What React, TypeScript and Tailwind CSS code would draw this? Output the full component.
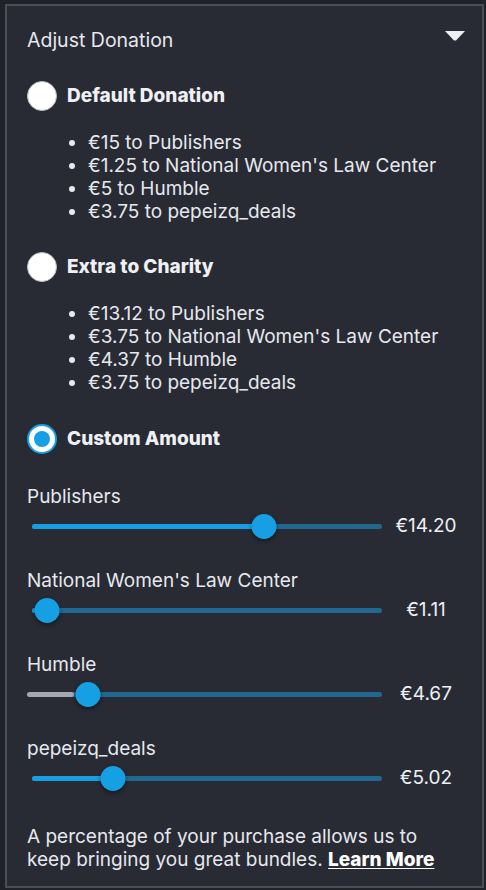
import React from 'react'

type Split = { name: string; value: string; pct: number; floor?: number }

const defaults = [
  '€15 to Publishers',
  "€1.25 to National Women's Law Center",
  '€5 to Humble',
  '€3.75 to pepeizq_deals',
]

const extra = [
  '€13.12 to Publishers',
  "€3.75 to National Women's Law Center",
  '€4.37 to Humble',
  '€3.75 to pepeizq_deals',
]

const splits: Split[] = [
  { name: 'Publishers', value: '€14.20', pct: 66.3 },
  { name: "National Women's Law Center", value: '€1.11', pct: 4.3 },
  { name: 'Humble', value: '€4.67', pct: 16, floor: 13 },
  { name: 'pepeizq_deals', value: '€5.02', pct: 23.1 },
]

function Radio({ checked }: { checked?: boolean }) {
  if (checked) {
    return (
      <span className="flex h-[30px] w-[30px] shrink-0 items-center justify-center rounded-full border-2 border-[#169fe3] bg-white">
        <span className="h-[16px] w-[16px] rounded-full bg-[#169fe3]" />
      </span>
    )
  }
  return <span className="h-[30px] w-[30px] shrink-0 rounded-full border border-[#b9bdc6] bg-white" />
}

function Option({ label, checked }: { label: string; checked?: boolean }) {
  return (
    <div className="flex h-[30px] items-center gap-[10px]">
      <Radio checked={checked} />
      <span className="text-[19px] font-extrabold text-[#eef0f4]">{label}</span>
    </div>
  )
}

function List({ items }: { items: string[] }) {
  return (
    <ul className="mt-[20px] list-disc pl-[61px] text-[19px] leading-[23px] marker:text-[#e6e8ee]">
      {items.map((t) => (
        <li key={t}>{t}</li>
      ))}
    </ul>
  )
}

function Slider({ split }: { split: Split }) {
  return (
    <div className="mt-[3px] flex h-[30px] items-center">
      {/* track area: x 27 -> 390 */}
      <div className="relative h-[30px] flex-1">
        <div className="absolute left-[5px] right-[8px] top-[13px] h-[5px] rounded-full bg-[#216891]" />
        {split.floor ? (
          <div
            className="absolute left-0 top-[13px] h-[5px] rounded-full bg-[#a4a7b0]"
            style={{ width: `${split.floor}%` }}
          />
        ) : (
          <div
            className="absolute left-[5px] top-[13px] h-[5px] rounded-full bg-[#169fe3]"
            style={{ width: `${(split.pct / 100) * 350}px` }}
          />
        )}
        <div
          className="absolute top-[3px] h-[25px] w-[25px] -translate-x-1/2 rounded-full bg-[#169fe3] shadow-[0_2px_4px_rgba(0,0,0,0.45)]"
          style={{ left: `${5 + (split.pct / 100) * 350}px` }}
        />
      </div>
      <span className="w-[72px] text-center text-[19px] text-[#eef0f4]">{split.value}</span>
    </div>
  )
}

export default function App() {
  return (
    <div className="min-h-[890px] w-[486px] bg-[#1f2228] pl-[5px] pr-[2px] pt-[4px] pb-[2px] font-['Inter','Liberation_Sans',sans-serif] text-[#e6e8ee]">
      <div className="h-[884px] border-2 border-[#4a4e58] bg-[#282b34] px-[20px] pt-[22px]">
        <div className="flex items-center justify-between">
          <span className="text-[19.5px] leading-[24px]">Adjust Donation</span>
          <svg width="20" height="10" viewBox="0 0 20 10" className="mr-[-3px] -mt-[8px]">
            <path d="M0 0H20L11 9.5H9Z" fill="#eceef3" />
          </svg>
        </div>

        <div className="mt-[29px]">
          <Option label="Default Donation" />
          <List items={defaults} />
        </div>

        <div className="mt-[29px]">
          <Option label="Extra to Charity" />
          <List items={extra} />
        </div>

        <div className="mt-[30px]">
          <Option label="Custom Amount" checked />
        </div>

        <div className="mt-[31px] flex flex-col gap-[28px]">
          {splits.map((s) => (
            <div key={s.name}>
              <div className="text-[19px] leading-[23px]">{s.name}</div>
              <Slider split={s} />
            </div>
          ))}
        </div>

        <p className="mt-[32px] text-[19px] leading-[23px]">
          A percentage of your purchase allows us to keep bringing you great bundles.{' '}
          <a className="font-extrabold text-white underline underline-offset-2">Learn More</a>
        </p>
      </div>
    </div>
  )
}
